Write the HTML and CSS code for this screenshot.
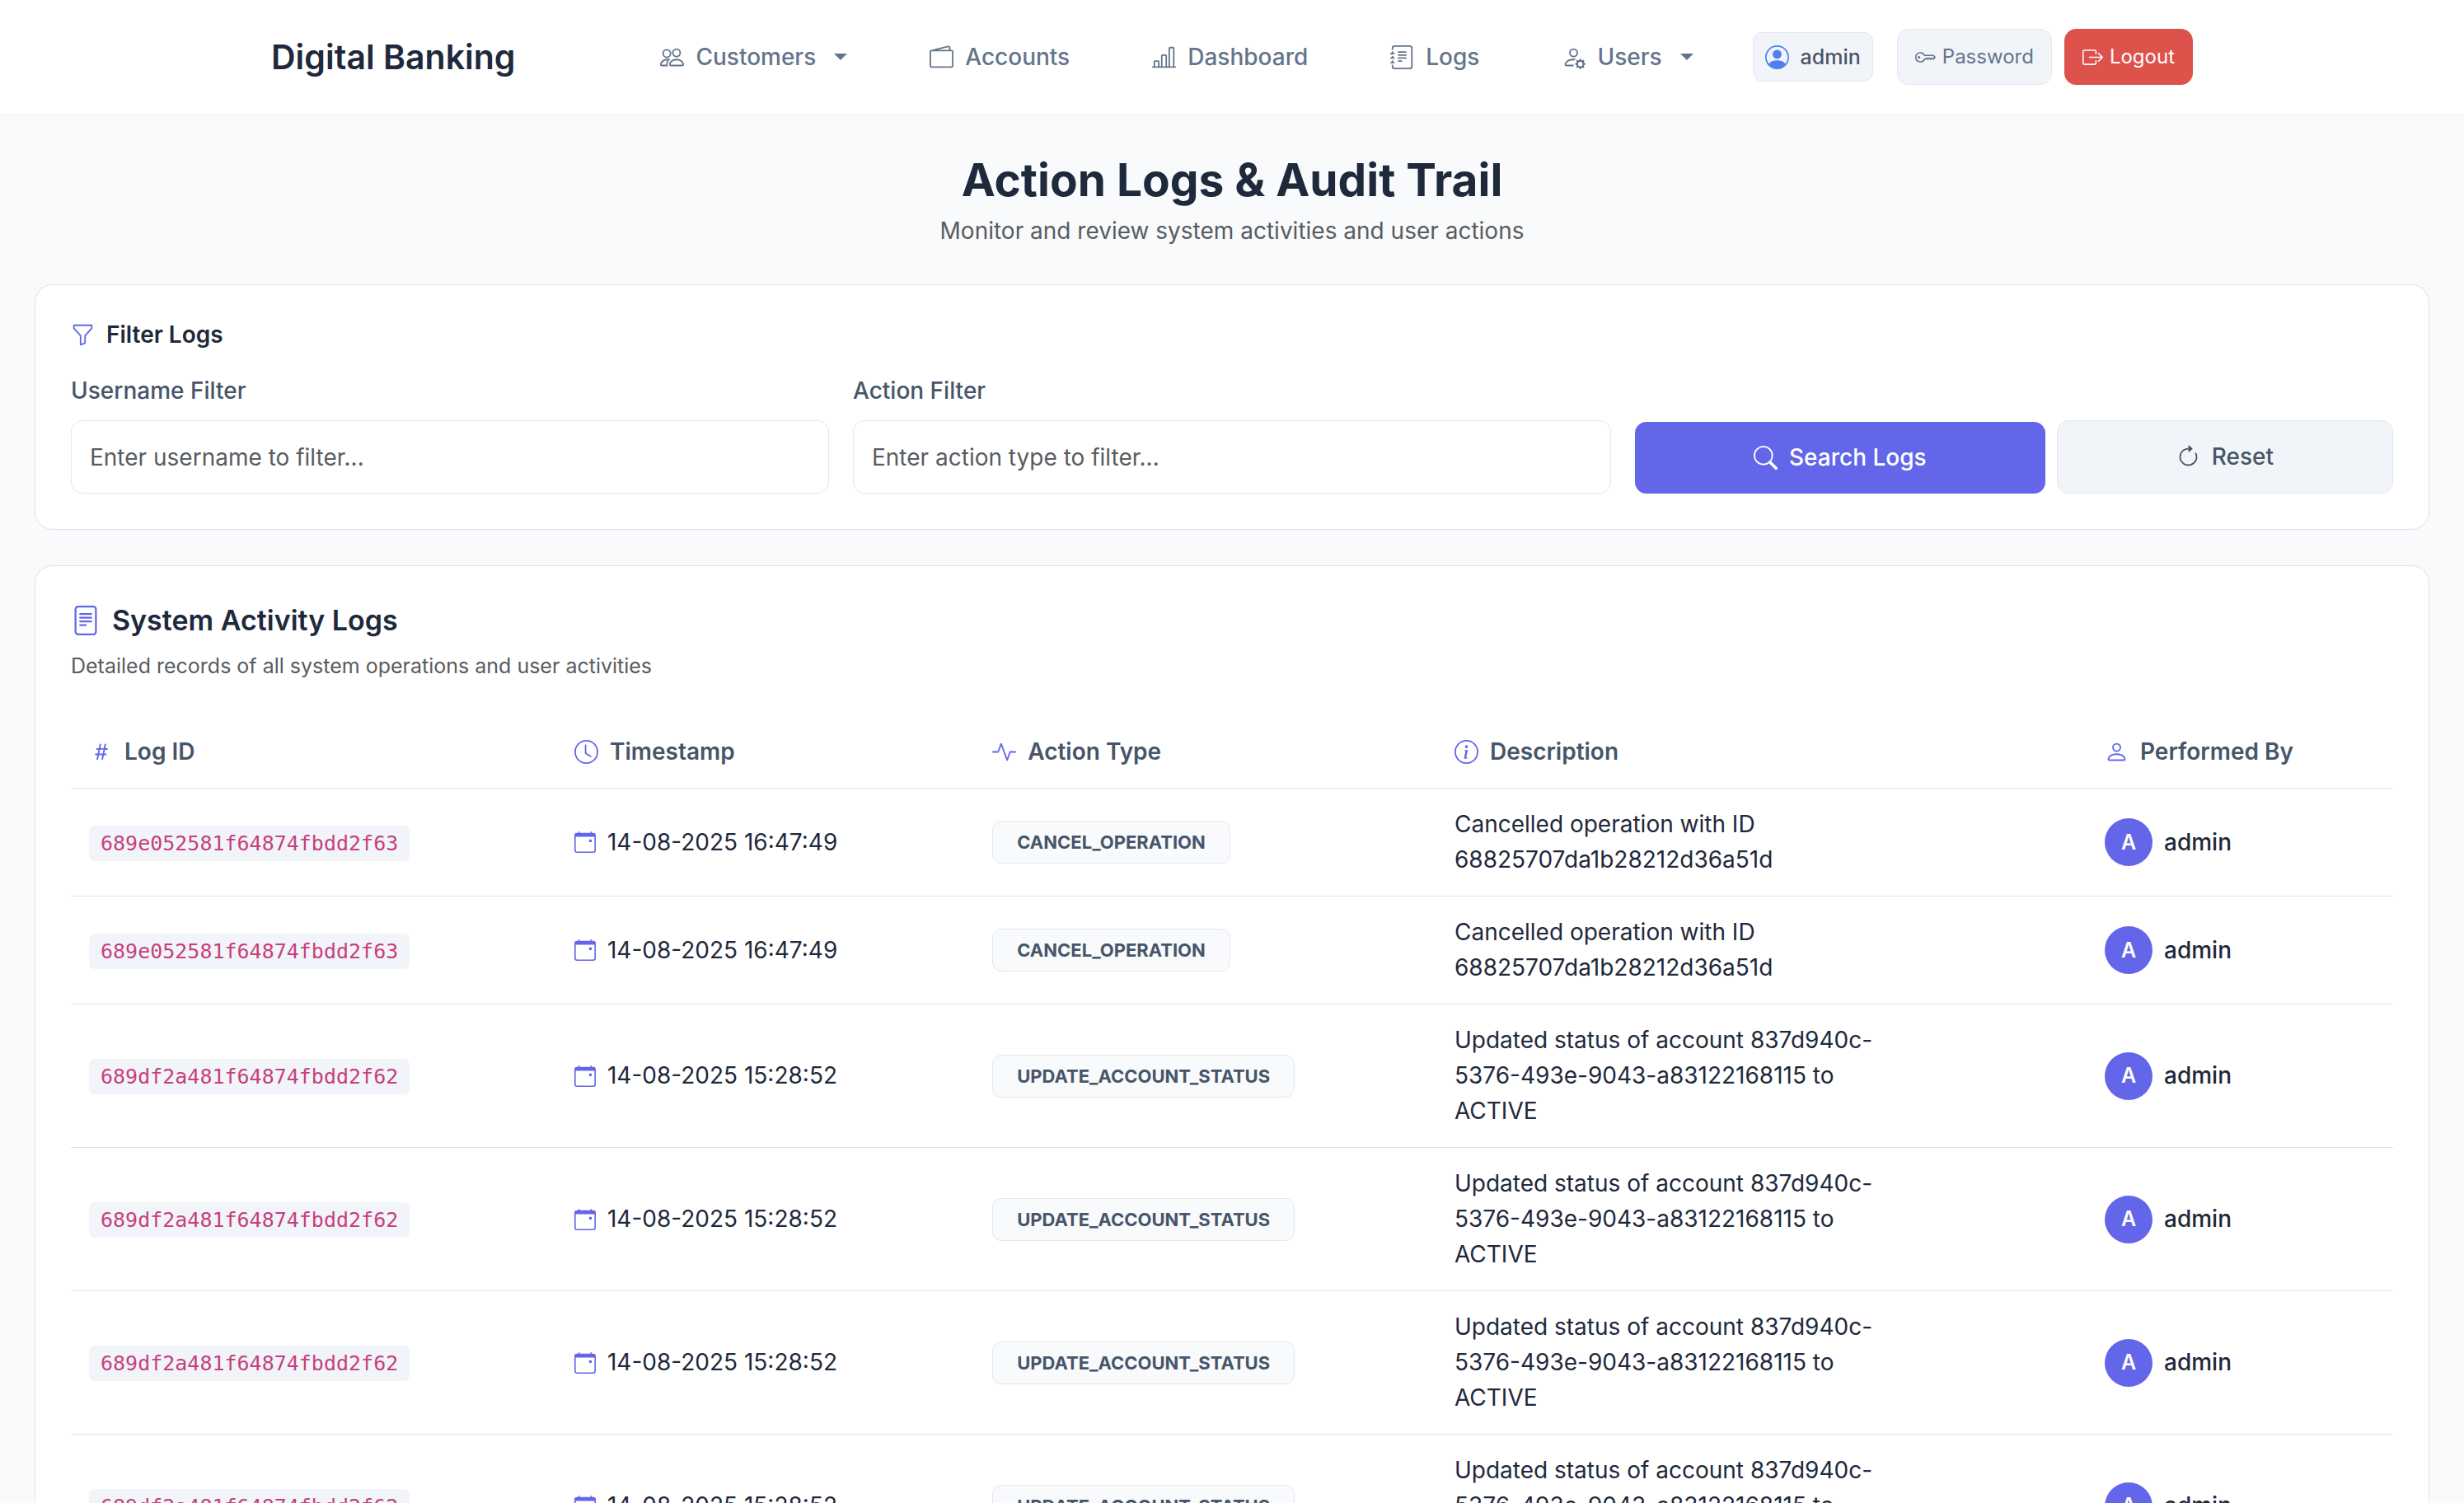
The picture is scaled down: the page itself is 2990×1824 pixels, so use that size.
FILE: index.html
```html
<!DOCTYPE html>
<html lang="en">
<head>
<meta charset="utf-8">
<meta name="viewport" content="width=device-width, initial-scale=1">
<title>Action Logs &amp; Audit Trail - Digital Banking</title>
<link rel="stylesheet" href="styles.css">
</head>
<body>
<svg class="sprite" aria-hidden="true">
  <symbol id="people" viewBox="0 0 16 16"><path d="M15 14s1 0 1-1-1-4-5-4-5 3-5 4 1 1 1 1h8Zm-7.978-1A.261.261 0 0 1 7 12.996c.001-.264.167-1.03.76-1.72C8.312 10.629 9.282 10 11 10c1.717 0 2.687.63 3.24 1.276.593.69.758 1.457.76 1.72l-.008.002A.274.274 0 0 1 15 13H7ZM11 7a2 2 0 1 0 0-4 2 2 0 0 0 0 4Zm3-2a3 3 0 1 1-6 0 3 3 0 0 1 6 0ZM6.936 9.28a5.88 5.88 0 0 0-1.23-.247A7.35 7.35 0 0 0 5 9c-4 0-5 3-5 4 0 .667.333 1 1 1h4.216A2.238 2.238 0 0 1 5 13c0-1.01.377-2.042 1.09-2.904.243-.294.526-.569.846-.816ZM4.92 10A5.493 5.493 0 0 0 4 13H1c0-.26.164-1.03.76-1.724.545-.636 1.492-1.256 3.16-1.275ZM1.5 5.5a3 3 0 1 1 6 0 3 3 0 0 1-6 0Zm3-2a2 2 0 1 0 0 4 2 2 0 0 0 0-4Z"/></symbol>
  <symbol id="wallet" viewBox="0 0 16 16"><path d="M12.136.326A1.5 1.5 0 0 1 14 1.78V3h.5A1.5 1.5 0 0 1 16 4.5v9a1.5 1.5 0 0 1-1.5 1.5h-13A1.5 1.5 0 0 1 0 13.5v-9a1.5 1.5 0 0 1 1.432-1.499L12.136.326zM5.562 3H13V1.78a.5.5 0 0 0-.621-.484L5.562 3zM1.5 4a.5.5 0 0 0-.5.5v9a.5.5 0 0 0 .5.5h13a.5.5 0 0 0 .5-.5v-9a.5.5 0 0 0-.5-.5h-13z"/></symbol>
  <symbol id="chart" viewBox="0 0 16 16"><path d="M11 2a1 1 0 0 1 1-1h2a1 1 0 0 1 1 1v12h.5a.5.5 0 0 1 0 1H.5a.5.5 0 0 1 0-1H1v-3a1 1 0 0 1 1-1h2a1 1 0 0 1 1 1v3h1V7a1 1 0 0 1 1-1h2a1 1 0 0 1 1 1v7h1V2zm1 12h2V2h-2v12zm-3 0V7H7v7h2zm-5 0v-3H2v3h2z"/></symbol>
  <symbol id="journal" viewBox="0 0 16 16"><path d="M5 10.5a.5.5 0 0 1 .5-.5h2a.5.5 0 0 1 0 1h-2a.5.5 0 0 1-.5-.5zm0-2a.5.5 0 0 1 .5-.5h5a.5.5 0 0 1 0 1h-5a.5.5 0 0 1-.5-.5zm0-2a.5.5 0 0 1 .5-.5h5a.5.5 0 0 1 0 1h-5a.5.5 0 0 1-.5-.5zm0-2a.5.5 0 0 1 .5-.5h5a.5.5 0 0 1 0 1h-5a.5.5 0 0 1-.5-.5z"/><path d="M3 0h10a2 2 0 0 1 2 2v12a2 2 0 0 1-2 2H3a2 2 0 0 1-2-2v-1h1v1a1 1 0 0 0 1 1h10a1 1 0 0 0 1-1V2a1 1 0 0 0-1-1H3a1 1 0 0 0-1 1v1H1V2a2 2 0 0 1 2-2z"/><path d="M1 5v-.5a.5.5 0 0 1 1 0V5h.5a.5.5 0 0 1 0 1h-2a.5.5 0 0 1 0-1H1zm0 3v-.5a.5.5 0 0 1 1 0V8h.5a.5.5 0 0 1 0 1h-2a.5.5 0 0 1 0-1H1zm0 3v-.5a.5.5 0 0 1 1 0v.5h.5a.5.5 0 0 1 0 1h-2a.5.5 0 0 1 0-1H1z"/></symbol>
  <symbol id="person-gear" viewBox="0 0 16 16"><path d="M11 5a3 3 0 1 1-6 0 3 3 0 0 1 6 0ZM8 7a2 2 0 1 0 0-4 2 2 0 0 0 0 4Zm.256 7a4.474 4.474 0 0 1-.229-1.004H3c.001-.246.154-.986.832-1.664C4.484 10.68 5.711 10 8 10c.26 0 .507.009.74.025.226-.341.496-.65.804-.918C9.077 9.038 8.564 9 8 9c-5 0-6 3-6 4s1 1 1 1h5.256Zm3.63-4.54c.18-.613 1.048-.613 1.229 0l.043.148a.64.64 0 0 0 .921.382l.136-.074c.561-.306 1.175.308.87.869l-.075.136a.64.64 0 0 0 .382.92l.149.045c.612.18.612 1.048 0 1.229l-.15.043a.64.64 0 0 0-.38.921l.074.136c.305.561-.309 1.175-.87.87l-.136-.075a.64.64 0 0 0-.92.382l-.045.149c-.18.612-1.048.612-1.229 0l-.043-.15a.64.64 0 0 0-.921-.38l-.136.074c-.561.305-1.175-.309-.87-.87l.075-.136a.64.64 0 0 0-.382-.92l-.148-.045c-.613-.18-.613-1.048 0-1.229l.148-.043a.64.64 0 0 0 .382-.921l-.074-.136c-.306-.561.308-1.175.869-.87l.136.075a.64.64 0 0 0 .92-.382l.045-.148ZM14 12.5a1.5 1.5 0 1 0-3 0 1.5 1.5 0 0 0 3 0Z"/></symbol>
  <symbol id="person-circle" viewBox="0 0 16 16"><path d="M11 6a3 3 0 1 1-6 0 3 3 0 0 1 6 0z"/><path fill-rule="evenodd" d="M0 8a8 8 0 1 1 16 0A8 8 0 0 1 0 8zm8-7a7 7 0 0 0-5.468 11.37C3.242 11.226 4.805 10 8 10s4.757 1.225 5.468 2.37A7 7 0 0 0 8 1z"/></symbol>
  <symbol id="key" viewBox="0 0 16 16"><path d="M0 8a4 4 0 0 1 7.465-2H14a.5.5 0 0 1 .354.146l1.5 1.5a.5.5 0 0 1 0 .708l-1.5 1.5a.5.5 0 0 1-.708 0L13 9.207l-.646.647a.5.5 0 0 1-.708 0L11 9.207l-.646.647a.5.5 0 0 1-.708 0L9 9.207l-.646.647A.5.5 0 0 1 8 10h-.535A4 4 0 0 1 0 8zm4-3a3 3 0 1 0 2.712 4.285A.5.5 0 0 1 7.163 9h.63l.853-.854a.5.5 0 0 1 .708 0l.646.647.646-.647a.5.5 0 0 1 .708 0l.646.647.646-.647a.5.5 0 0 1 .708 0l.646.647.793-.793-1-1h-6.63a.5.5 0 0 1-.451-.285A3 3 0 0 0 4 5z"/><path d="M4 8a1 1 0 1 1-2 0 1 1 0 0 1 2 0z"/></symbol>
  <symbol id="logout" viewBox="0 0 16 16"><path d="M10 12.5a.5.5 0 0 1-.5.5h-8a.5.5 0 0 1-.5-.5v-9a.5.5 0 0 1 .5-.5h8a.5.5 0 0 1 .5.5v2a.5.5 0 0 0 1 0v-2A1.5 1.5 0 0 0 9.5 2h-8A1.5 1.5 0 0 0 0 3.5v9A1.5 1.5 0 0 0 1.5 14h8a1.5 1.5 0 0 0 1.5-1.5v-2a.5.5 0 0 0-1 0v2z"/><path d="M15.854 8.354a.5.5 0 0 0 0-.708l-3-3a.5.5 0 0 0-.708.708L14.293 7.5H5.5a.5.5 0 0 0 0 1h8.793l-2.147 2.146a.5.5 0 0 0 .708.708l3-3z"/></symbol>
  <symbol id="funnel" viewBox="0 0 16 16"><path d="M1.5 1.5A.5.5 0 0 1 2 1h12a.5.5 0 0 1 .5.5v2a.5.5 0 0 1-.128.334L10 8.692V13.5a.5.5 0 0 1-.342.474l-3 1A.5.5 0 0 1 6 14.5V8.692L1.628 3.834A.5.5 0 0 1 1.5 3.5v-2zm1 .5v1.308l4.372 4.858A.5.5 0 0 1 7 8.5v5.306l2-.666V8.5a.5.5 0 0 1 .128-.334L13.5 3.308V2h-11z"/></symbol>
  <symbol id="search" viewBox="0 0 16 16"><path d="M11.742 10.344a6.5 6.5 0 1 0-1.397 1.398h-.001c.03.04.062.078.098.115l3.85 3.85a1 1 0 0 0 1.415-1.414l-3.85-3.85a1.007 1.007 0 0 0-.115-.1zM12 6.5a5.5 5.5 0 1 1-11 0 5.5 5.5 0 0 1 11 0z"/></symbol>
  <symbol id="reset" viewBox="0 0 16 16"><path fill-rule="evenodd" d="M8 3a5 5 0 1 0 4.546 2.914.5.5 0 0 1 .908-.417A6 6 0 1 1 8 2v1z"/><path d="M8 4.466V.534a.25.25 0 0 1 .41-.192l2.36 1.966c.12.1.12.284 0 .384L8.41 4.658A.25.25 0 0 1 8 4.466z"/></symbol>
  <symbol id="file-text" viewBox="0 0 16 16"><path d="M5 4a.5.5 0 0 0 0 1h6a.5.5 0 0 0 0-1H5zm-.5 2.5A.5.5 0 0 1 5 6h6a.5.5 0 0 1 0 1H5a.5.5 0 0 1-.5-.5zM5 8a.5.5 0 0 0 0 1h6a.5.5 0 0 0 0-1H5zm0 2a.5.5 0 0 0 0 1h3a.5.5 0 0 0 0-1H5z"/><path d="M2 2a2 2 0 0 1 2-2h8a2 2 0 0 1 2 2v12a2 2 0 0 1-2 2H4a2 2 0 0 1-2-2V2zm10-1H4a1 1 0 0 0-1 1v12a1 1 0 0 0 1 1h8a1 1 0 0 0 1-1V2a1 1 0 0 0-1-1z"/></symbol>
  <symbol id="hash" viewBox="0 0 16 16"><path d="M8.39 12.648a1.32 1.32 0 0 0-.015.18c0 .305.21.508.5.508.266 0 .492-.172.555-.477l.554-2.703h1.204c.421 0 .617-.234.617-.547 0-.312-.188-.53-.617-.53h-.985l.516-2.524h1.265c.43 0 .618-.227.618-.547 0-.313-.188-.524-.618-.524h-1.046l.476-2.304a1.06 1.06 0 0 0 .016-.164.51.51 0 0 0-.516-.516.54.54 0 0 0-.539.43l-.523 2.554H7.617l.477-2.304c.008-.04.015-.118.015-.164a.512.512 0 0 0-.523-.516.539.539 0 0 0-.531.43L6.53 5.484H5.414c-.43 0-.617.22-.617.532 0 .312.187.539.617.539h.906l-.515 2.523H4.609c-.421 0-.609.219-.609.531 0 .313.188.547.61.547h.976l-.516 2.492c-.008.04-.015.125-.015.18 0 .305.21.508.5.508.265 0 .492-.172.554-.477l.555-2.703h2.242l-.515 2.492zm-1-6.109h2.266l-.515 2.563H6.859l.532-2.563z"/></symbol>
  <symbol id="clock" viewBox="0 0 16 16"><path d="M8 3.5a.5.5 0 0 0-1 0V9a.5.5 0 0 0 .252.434l3.5 2a.5.5 0 0 0 .496-.868L8 8.71V3.5z"/><path d="M8 16A8 8 0 1 0 8 0a8 8 0 0 0 0 16zm7-8A7 7 0 1 1 1 8a7 7 0 0 1 14 0z"/></symbol>
  <symbol id="activity" viewBox="0 0 16 16"><path d="M6 2a.5.5 0 0 1 .47.33L10 12.036l1.53-4.208A.5.5 0 0 1 12 7.5h3.5a.5.5 0 0 1 0 1h-3.15l-1.88 5.17a.5.5 0 0 1-.94 0L6 3.964 4.47 8.171A.5.5 0 0 1 4 8.5H.5a.5.5 0 0 1 0-1h3.15l1.88-5.17A.5.5 0 0 1 6 2Z"/></symbol>
  <symbol id="info" viewBox="0 0 16 16"><path d="M8 15A7 7 0 1 1 8 1a7 7 0 0 1 0 14zm0 1A8 8 0 1 0 8 0a8 8 0 0 0 0 16z"/><path d="m8.93 6.588-2.29.287-.082.38.45.083c.294.07.352.176.288.469l-.738 3.468c-.194.897.105 1.319.808 1.319.545 0 1.178-.252 1.465-.598l.088-.416c-.2.176-.492.246-.686.246-.275 0-.375-.193-.304-.533L8.93 6.588zM9 4.5a1 1 0 1 1-2 0 1 1 0 0 1 2 0z"/></symbol>
  <symbol id="person" viewBox="0 0 16 16"><path d="M8 8a3 3 0 1 0 0-6 3 3 0 0 0 0 6Zm2-3a2 2 0 1 1-4 0 2 2 0 0 1 4 0Zm4 8c0 1-1 1-1 1H3s-1 0-1-1 1-4 6-4 6 3 6 4Zm-1-.004c-.001-.246-.154-.986-.832-1.664C11.516 10.68 10.289 10 8 10c-2.29 0-3.516.68-4.168 1.332-.678.678-.83 1.418-.832 1.664h10Z"/></symbol>
  <symbol id="calendar" viewBox="0 0 16 16"><path d="M11 6.500a.5.5 0 0 1 .5-.5h1a.5.5 0 0 1 .5.5v1a.5.5 0 0 1-.5.5h-1a.5.5 0 0 1-.5-.5v-1z"/><path d="M3.500 0a.5.5 0 0 1 .5.5V1h8V.5a.5.5 0 0 1 1 0V1h1a2 2 0 0 1 2 2v11a2 2 0 0 1-2 2H2a2 2 0 0 1-2-2V3a2 2 0 0 1 2-2h1V.5a.5.5 0 0 1 .5-.5zM1 4v10a1 1 0 0 0 1 1h12a1 1 0 0 0 1-1V4H1z"/></symbol>
</svg>

<header class="navbar">
  <div class="navbar-inner">
    <a class="brand" href="#">Digital Banking</a>
    <nav class="nav">
      <button type="button" class="nav-link"><svg class="icon"><use href="#people"/></svg>Customers<span class="caret"></span></button>
      <a class="nav-link" href="#"><svg class="icon"><use href="#wallet"/></svg>Accounts</a>
      <a class="nav-link" href="#"><svg class="icon"><use href="#chart"/></svg>Dashboard</a>
      <a class="nav-link" href="#"><svg class="icon"><use href="#journal"/></svg>Logs</a>
      <button type="button" class="nav-link"><svg class="icon"><use href="#person-gear"/></svg>Users<span class="caret"></span></button>
    </nav>
    <div class="account">
      <span class="user-chip"><svg class="icon"><use href="#person-circle"/></svg>admin</span>
      <a class="small-btn small-btn-light" href="#"><svg class="icon"><use href="#key"/></svg>Password</a>
      <button type="button" class="small-btn small-btn-danger"><svg class="icon"><use href="#logout"/></svg>Logout</button>
    </div>
  </div>
</header>

<main class="page">
  <div class="page-head">
    <h1>Action Logs &amp; Audit Trail</h1>
    <p>Monitor and review system activities and user actions</p>
  </div>

  <section class="card">
    <h2 class="filter-title"><svg class="icon"><use href="#funnel"/></svg>Filter Logs</h2>
    <form class="filters">
      <div class="field">
        <label for="username">Username Filter</label>
        <input id="username" type="text" placeholder="Enter username to filter...">
      </div>
      <div class="field">
        <label for="action">Action Filter</label>
        <input id="action" type="text" placeholder="Enter action type to filter...">
      </div>
      <div class="filter-actions">
        <button type="submit" class="btn btn-primary"><svg class="icon"><use href="#search"/></svg>Search Logs</button>
        <button type="reset" class="btn btn-light"><svg class="icon"><use href="#reset"/></svg>Reset</button>
      </div>
    </form>
  </section>

  <section class="card">
    <h2 class="logs-title"><svg class="icon"><use href="#file-text"/></svg>System Activity Logs</h2>
    <p class="logs-sub">Detailed records of all system operations and user activities</p>
    <table class="logs">
      <colgroup><col class="c-id"><col class="c-time"><col class="c-type"><col class="c-desc"><col></colgroup>
      <thead>
        <tr>
          <th scope="col"><span class="cell"><svg class="icon"><use href="#hash"/></svg>Log ID</span></th>
          <th scope="col"><span class="cell"><svg class="icon"><use href="#clock"/></svg>Timestamp</span></th>
          <th scope="col"><span class="cell"><svg class="icon"><use href="#activity"/></svg>Action Type</span></th>
          <th scope="col"><span class="cell"><svg class="icon"><use href="#info"/></svg>Description</span></th>
          <th scope="col"><span class="cell"><svg class="icon"><use href="#person"/></svg>Performed By</span></th>
        </tr>
      </thead>
      <tbody>
        <tr>
          <td><code>689e052581f64874fbdd2f63</code></td>
          <td><span class="cell"><svg class="icon icon-sm"><use href="#calendar"/></svg>14-08-2025 16:47:49</span></td>
          <td><span class="badge">CANCEL_OPERATION</span></td>
          <td><div class="desc">Cancelled operation with ID 68825707da1b28212d36a51d</div></td>
          <td><span class="cell who"><span class="avatar">A</span>admin</span></td>
        </tr>
        <tr>
          <td><code>689e052581f64874fbdd2f63</code></td>
          <td><span class="cell"><svg class="icon icon-sm"><use href="#calendar"/></svg>14-08-2025 16:47:49</span></td>
          <td><span class="badge">CANCEL_OPERATION</span></td>
          <td><div class="desc">Cancelled operation with ID 68825707da1b28212d36a51d</div></td>
          <td><span class="cell who"><span class="avatar">A</span>admin</span></td>
        </tr>
        <tr>
          <td><code>689df2a481f64874fbdd2f62</code></td>
          <td><span class="cell"><svg class="icon icon-sm"><use href="#calendar"/></svg>14-08-2025 15:28:52</span></td>
          <td><span class="badge">UPDATE_ACCOUNT_STATUS</span></td>
          <td><div class="desc">Updated status of account 837d940c-5376-493e-9043-a83122168115 to ACTIVE</div></td>
          <td><span class="cell who"><span class="avatar">A</span>admin</span></td>
        </tr>
        <tr>
          <td><code>689df2a481f64874fbdd2f62</code></td>
          <td><span class="cell"><svg class="icon icon-sm"><use href="#calendar"/></svg>14-08-2025 15:28:52</span></td>
          <td><span class="badge">UPDATE_ACCOUNT_STATUS</span></td>
          <td><div class="desc">Updated status of account 837d940c-5376-493e-9043-a83122168115 to ACTIVE</div></td>
          <td><span class="cell who"><span class="avatar">A</span>admin</span></td>
        </tr>
        <tr>
          <td><code>689df2a481f64874fbdd2f62</code></td>
          <td><span class="cell"><svg class="icon icon-sm"><use href="#calendar"/></svg>14-08-2025 15:28:52</span></td>
          <td><span class="badge">UPDATE_ACCOUNT_STATUS</span></td>
          <td><div class="desc">Updated status of account 837d940c-5376-493e-9043-a83122168115 to ACTIVE</div></td>
          <td><span class="cell who"><span class="avatar">A</span>admin</span></td>
        </tr>
        <tr>
          <td><code>689df2a481f64874fbdd2f62</code></td>
          <td><span class="cell"><svg class="icon icon-sm"><use href="#calendar"/></svg>14-08-2025 15:28:52</span></td>
          <td><span class="badge">UPDATE_ACCOUNT_STATUS</span></td>
          <td><div class="desc">Updated status of account 837d940c-5376-493e-9043-a83122168115 to ACTIVE</div></td>
          <td><span class="cell who"><span class="avatar">A</span>admin</span></td>
        </tr>
      </tbody>
    </table>
  </section>
</main>
</body>
</html>
```
FILE: styles.css
```css
:root {
  --ink: #1e293b;
  --slate: #475569;
  --nav: #64748b;
  --muted: #595c5f;
  --accent: #6366e8;
  --line: #e2e8f0;
  --rule: #dee2e6;
  --soft: #f1f5f9;
  --wash: #f8fafc;
}

*, *::before, *::after { box-sizing: border-box; }

body {
  margin: 0;
  background: var(--wash);
  color: var(--ink);
  font: 400 28px/43px Inter, "Liberation Sans", sans-serif;
}

h1, h2, p { margin: 0; }
a { color: inherit; text-decoration: none; }
button, input { font: inherit; color: inherit; margin: 0; }
button { cursor: pointer; }

.sprite { display: none; }

.icon {
  flex: none;
  width: 29px;
  height: 29px;
  fill: currentColor;
}

.icon-sm {
  width: 26px;
  height: 26px;
}

/* Top bar */
.navbar {
  background: #fff;
  border-bottom: 1px solid #f1f3f5;
}

.navbar-inner {
  display: flex;
  align-items: center;
  max-width: 2376px;
  min-height: 138px;
  margin: 0 auto;
  padding: 0 22px;
}

.brand {
  font-size: 41px;
  font-weight: 600;
  line-height: 65px;
  white-space: nowrap;
}

.nav {
  display: flex;
  gap: 100px;
  margin-left: auto;
}

.nav-link {
  display: flex;
  align-items: center;
  gap: 14px;
  padding: 0;
  border: 0;
  background: none;
  color: var(--nav);
  font-weight: 500;
}

.caret {
  margin-left: 8px;
  border: 8px solid transparent;
  border-top-color: currentColor;
  border-bottom: 0;
}

.account {
  display: flex;
  align-items: center;
  gap: 15px;
  margin-left: 72px;
  font-size: 24px;
  line-height: 38px;
}

.user-chip {
  display: flex;
  align-items: center;
  gap: 14px;
  margin-right: 14px;
  padding: 10px 14px;
  border: 1px solid var(--line);
  border-radius: 11px;
  background: var(--soft);
  color: var(--slate);
  font-size: 25px;
  font-weight: 500;
}

.user-chip .icon { color: #4f80ee; }

.small-btn {
  display: flex;
  align-items: center;
  gap: 8px;
  padding: 14px 21px;
  border: 1px solid var(--line);
  border-radius: 14px;
}

.small-btn .icon {
  width: 25px;
  height: 25px;
}

.small-btn-light {
  background: var(--soft);
  color: var(--nav);
}

.small-btn-danger {
  background: #de524c;
  border-color: #de524c;
  color: #fff;
}

/* Page */
.page {
  display: flex;
  flex-direction: column;
  gap: 43px;
  padding: 45px 42px;
}

.page-head {
  display: flex;
  flex-direction: column;
  gap: 6px;
  text-align: center;
}

.page-head h1 {
  font-size: 55px;
  font-weight: 700;
  line-height: 69px;
}

.page-head p { color: var(--muted); }

.card {
  padding: 43px;
  border: 1px solid var(--rule);
  border-radius: 22px;
  background: #fff;
}

/* Filters */
.filter-title {
  display: flex;
  align-items: center;
  gap: 14px;
  margin-bottom: 29px;
  font-size: 28px;
  font-weight: 600;
  line-height: 35px;
}

.filter-title .icon,
.logs-title .icon,
.logs .icon { color: var(--accent); }

.filters {
  display: grid;
  grid-template-columns: repeat(3, minmax(0, 1fr));
  gap: 29px;
  align-items: end;
}

.field {
  display: flex;
  flex-direction: column;
  gap: 14px;
}

.field label {
  color: var(--slate);
  font-weight: 500;
}

.field input {
  width: 100%;
  padding: 22px;
  border: 1px solid var(--line);
  border-radius: 14px;
  background: #fff;
  height: 89px;
}

.field input::placeholder {
  color: var(--muted);
  opacity: 1;
}

.filter-actions {
  display: flex;
  align-items: flex-end;
  gap: 14px;
}

.btn {
  display: flex;
  flex: 1 1 auto;
  align-items: center;
  justify-content: center;
  gap: 14px;
  padding: 22px;
  border: 0;
  border-radius: 14px;
  font-weight: 500;
}

.btn-primary {
  background: var(--accent);
  color: #fff;
}

.btn-light {
  border: 1px solid var(--line);
  background: var(--soft);
  color: var(--slate);
}

/* Activity log */
.logs-title {
  display: flex;
  align-items: center;
  gap: 14px;
  margin-bottom: 14px;
  font-size: 34px;
  font-weight: 600;
  line-height: 45px;
}

.logs-title .icon {
  width: 36px;
  height: 36px;
}

.logs-sub {
  margin-bottom: 42px;
  color: var(--muted);
  font-size: 25px;
  line-height: 38px;
}

.logs {
  width: 100%;
  table-layout: fixed;
  border-spacing: 0;
}

.c-id { width: 20.9%; }
.c-time { width: 18%; }
.c-type { width: 19.9%; }
.c-desc { width: 28%; }

.logs th,
.logs td {
  padding: 22px;
  border-bottom: 1px solid var(--rule);
  text-align: left;
  vertical-align: middle;
}

.logs th {
  color: var(--slate);
  font-weight: 600;
}

.cell {
  display: flex;
  align-items: center;
  gap: 14px;
  white-space: nowrap;
}

.logs code {
  padding: 7px 14px;
  border-radius: 7px;
  background: var(--soft);
  color: #c83e80;
  font: 25px "DejaVu Sans Mono", "Liberation Mono", monospace;
}

.badge {
  display: block;
  width: max-content;
  padding: 14px 29px;
  border: 1px solid var(--line);
  border-radius: 11px;
  background: var(--wash);
  color: var(--slate);
  font-size: 22px;
  font-weight: 700;
  line-height: 22px;
}

.desc { max-width: 540px; }

.who { font-weight: 500; }

.avatar {
  display: grid;
  place-items: center;
  width: 58px;
  height: 58px;
  border-radius: 50%;
  background: var(--accent);
  color: #fff;
  font-size: 25px;
  font-weight: 600;
}
```
